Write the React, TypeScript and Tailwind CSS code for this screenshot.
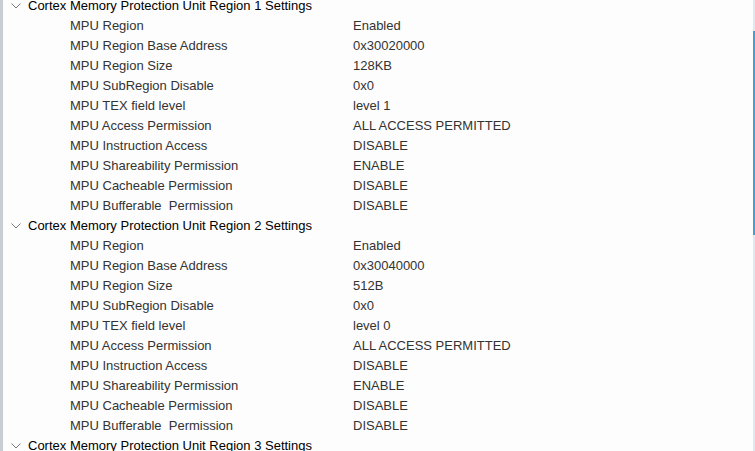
import React from "react";

type Item = [string, string];

const region1: Item[] = [
  ["MPU Region", "Enabled"],
  ["MPU Region Base Address", "0x30020000"],
  ["MPU Region Size", "128KB"],
  ["MPU SubRegion Disable", "0x0"],
  ["MPU TEX field level", "level 1"],
  ["MPU Access Permission", "ALL ACCESS PERMITTED"],
  ["MPU Instruction Access", "DISABLE"],
  ["MPU Shareability Permission", "ENABLE"],
  ["MPU Cacheable Permission", "DISABLE"],
  ["MPU Bufferable  Permission", "DISABLE"],
];

const region2: Item[] = [
  ["MPU Region", "Enabled"],
  ["MPU Region Base Address", "0x30040000"],
  ["MPU Region Size", "512B"],
  ["MPU SubRegion Disable", "0x0"],
  ["MPU TEX field level", "level 0"],
  ["MPU Access Permission", "ALL ACCESS PERMITTED"],
  ["MPU Instruction Access", "DISABLE"],
  ["MPU Shareability Permission", "ENABLE"],
  ["MPU Cacheable Permission", "DISABLE"],
  ["MPU Bufferable  Permission", "DISABLE"],
];

function Chevron() {
  return (
    <svg width="10" height="6" viewBox="0 0 10 6" className="shrink-0">
      <path d="M0.5 0.5 L5 5 L9.5 0.5" fill="none" stroke="#7a7a7a" strokeWidth="1" />
    </svg>
  );
}

function Header({ title }: { title: string }) {
  return (
    <div className="flex h-[20px] items-center">
      <div className="flex w-[28px] justify-end pr-[7px]">
        <Chevron />
      </div>
      <span className="text-[13px] text-[#000000] whitespace-pre">{title}</span>
    </div>
  );
}

function Row({ item }: { item: Item }) {
  return (
    <div className="flex h-[20px] items-center text-[13px] text-[#333333]">
      <span className="w-[283px] pl-[70px] shrink-0 whitespace-pre box-content">{item[0]}</span>
      <span className="whitespace-pre">{item[1]}</span>
    </div>
  );
}

export default function App() {
  return (
    <div
      className="flex h-[451px] w-[755px] overflow-hidden bg-[#fdfdfd]"
      style={{ fontFamily: '"Liberation Sans", Arial, sans-serif' }}
    >
      <div className="w-[3px] shrink-0 bg-[#c9cdd1]" />
      <div className="flex-1 overflow-hidden">
        <div className="-mt-[4px] -ml-[3px]">
          <Header title="Cortex Memory Protection Unit Region 1 Settings" />
          {region1.map((it, i) => (
            <Row key={"a" + i} item={it} />
          ))}
          <Header title="Cortex Memory Protection Unit Region 2 Settings" />
          {region2.map((it, i) => (
            <Row key={"b" + i} item={it} />
          ))}
          <Header title="Cortex Memory Protection Unit Region 3 Settings" />
        </div>
      </div>
      <div className="flex w-[2px] shrink-0 flex-col bg-[#dce8f4]">
        <div className="h-[31px]" />
        <div className="h-[204px] bg-[#3aa3dd]" />
      </div>
    </div>
  );
}
